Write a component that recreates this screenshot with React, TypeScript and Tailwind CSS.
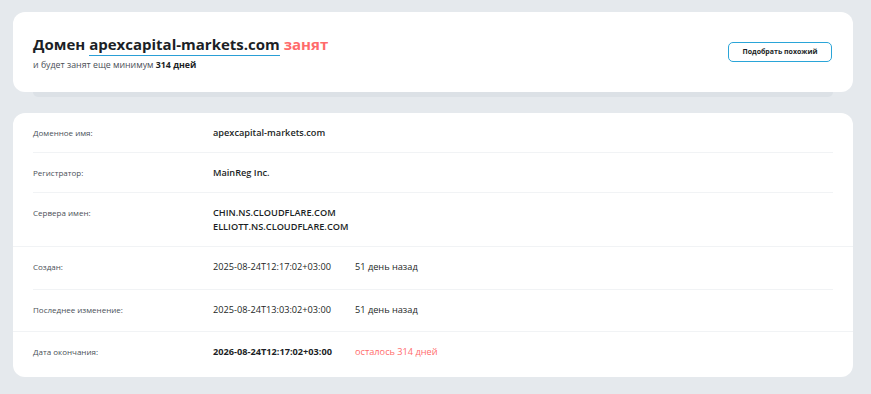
import React from "react";

const font = { fontFamily: '"Open Sans", "Noto Sans", sans-serif' };

function Row({
  label,
  children,
  extra,
  border = true,
  py = "pt-[13px] pb-[12px]",
}: {
  label: string;
  children: React.ReactNode;
  extra?: React.ReactNode;
  border?: boolean;
  py?: string;
}) {
  return (
    <div className={`flex items-start ${py} ${border ? "border-b border-[#f1f3f5]" : ""}`}>
      <div className="w-[180px] shrink-0 text-[8px] leading-[14px] text-[#4a4f57]">{label}</div>
      <div className="w-[142px] shrink-0 text-[9.2px] leading-[14px] text-[#1c1f26]">{children}</div>
      {extra && <div className="text-[9.2px] leading-[14px]">{extra}</div>}
    </div>
  );
}

export default function App() {
  return (
    <div className="min-h-[394px] w-[871px] bg-[#e5e9ed] pl-[13px] pr-[18px] pt-[12px]" style={font}>
      <div className="flex h-[80px] items-center justify-between rounded-[12px] bg-white pl-[20px] pr-[21px]">
        <div className="pt-[1px]">
          <div className="text-[15px] font-bold leading-[20px] text-[#1c1f26]">
            Домен{" "}
            <span className="border-b border-[#2a9fd6] pb-[1px]">apexcapital-markets.com</span>{" "}
            <span className="text-[#ff6b6b]">занят</span>
          </div>
          <div className="mt-[4px] text-[8.8px] leading-[14px] text-[#4a4f57]">
            и будет занят еще минимум <span className="font-bold text-[#1c1f26]">314 дней</span>
          </div>
        </div>
        <button className="h-[20px] w-[104px] rounded-[5px] border-[1.5px] border-[#2aa5d8] bg-white text-[7px] font-bold text-[#1c1f26]">
          Подобрать похожий
        </button>
      </div>
      <div className="mx-[20px] h-[5px] rounded-b-[6px] bg-[#dce1e6]" />

      <div className="mt-[16px] rounded-[12px] bg-white pb-[3px]">
        <div className="border-b border-[#f1f3f5] px-[20px]">
          <Row label="Доменное имя:">
            <span className="font-semibold">apexcapital-markets.com</span>
          </Row>
          <Row label="Регистратор:">
            <span className="font-semibold">MainReg Inc.</span>
          </Row>
          <Row label="Сервера имен:" border={false}>
            <div className="whitespace-nowrap font-semibold">
              CHIN.NS.CLOUDFLARE.COM
              <br />
              ELLIOTT.NS.CLOUDFLARE.COM
            </div>
          </Row>
        </div>
        <div className="border-b border-[#f1f3f5] px-[20px]">
          <Row label="Создан:" py="pt-[13px] pb-[15px]" extra={<span className="text-[#1c1f26]">51 день назад</span>}>
            <span className="whitespace-nowrap">2025-08-24T12:17:02+03:00</span>
          </Row>
          <Row
            label="Последнее изменение:"
            py="pt-[13px] pb-[14px]"
            border={false}
            extra={<span className="text-[#1c1f26]">51 день назад</span>}
          >
            <span className="whitespace-nowrap">2025-08-24T13:03:02+03:00</span>
          </Row>
        </div>
        <div className="px-[20px]">
          <Row
            label="Дата окончания:"
            py="pt-[13px] pb-[15px]"
            border={false}
            extra={<span className="text-[#ff6b6b]">осталось 314 дней</span>}
          >
            <span className="whitespace-nowrap font-bold">2026-08-24T12:17:02+03:00</span>
          </Row>
        </div>
      </div>
    </div>
  );
}
